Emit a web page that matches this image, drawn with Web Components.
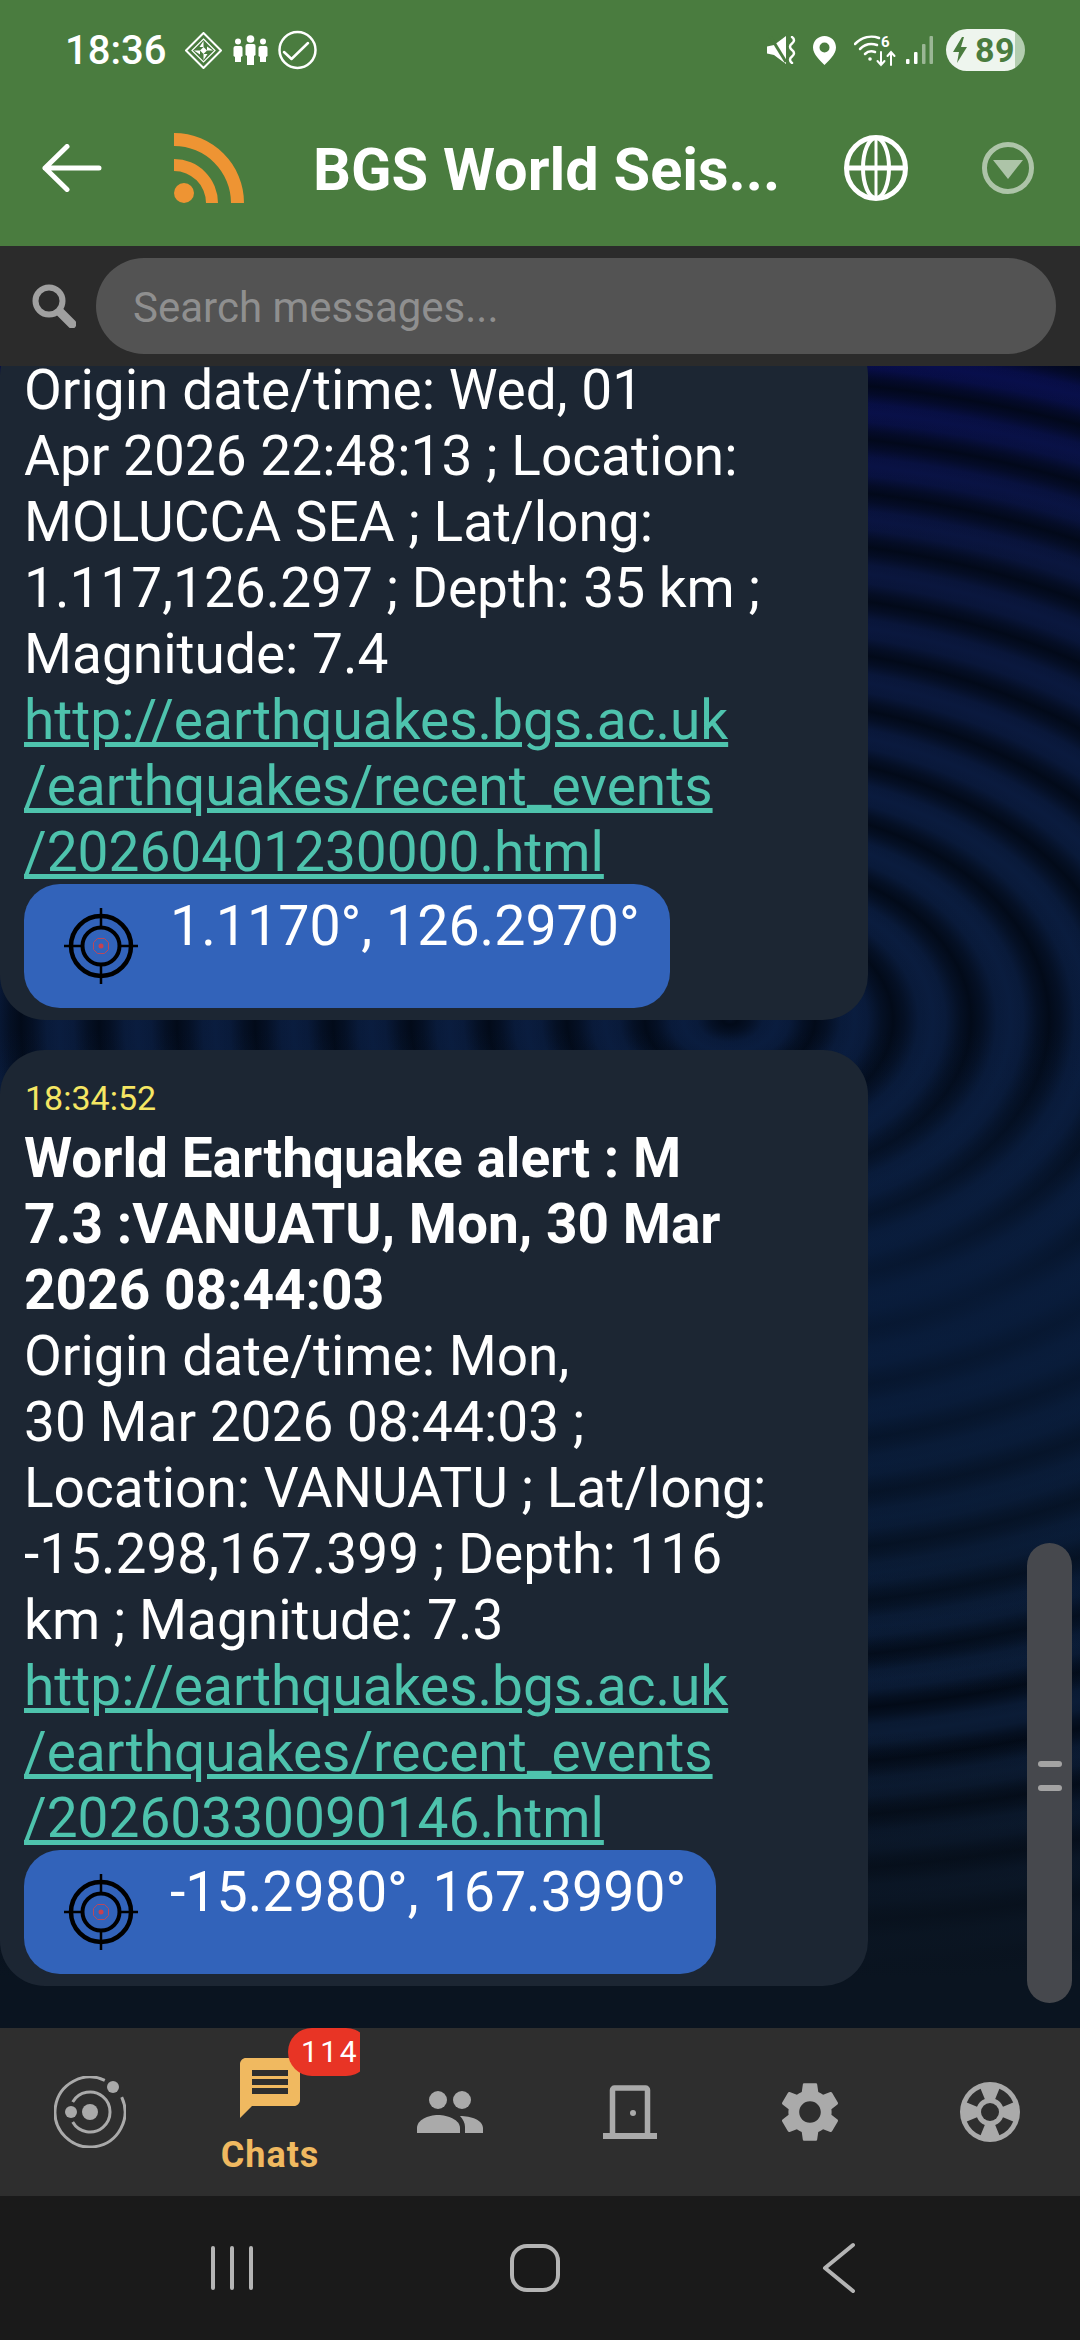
<!DOCTYPE html>
<html>
<head>
<meta charset="utf-8">
<title>BGS World Seismic</title>
<style>
html, body { margin: 0; padding: 0; width: 1080px; height: 2340px; overflow: hidden; background: #1a1a1a; }
body { font-family: Roboto, "Liberation Sans", sans-serif; color: #fff; display: flex; flex-direction: column; }
</style>
</head>
<body>
<app-header></app-header>
<search-bar>Search messages...</search-bar>
<chat-view>
  <chat-message>
    Origin date/time: Wed, 01<br>Apr 2026 22:48:13 ; Location:<br>MOLUCCA SEA ; Lat/long:<br>1.117,126.297 ; Depth: 35 km ;<br>Magnitude: 7.4
    <a slot="link">http://earthquakes.bgs.ac.uk<br>/earthquakes/recent_events<br>/20260401230000.html</a>
    <location-pill slot="pill">1.1170°, 126.2970°</location-pill>
  </chat-message>
  <chat-message>
    <span slot="time">18:34:52</span>
    <span slot="title">World Earthquake alert : M<br>7.3 :VANUATU, Mon, 30 Mar<br>2026 08:44:03</span>
    Origin date/time: Mon,<br>30 Mar 2026 08:44:03 ;<br>Location: VANUATU ; Lat/long:<br>-15.298,167.399 ; Depth: 116<br>km ; Magnitude: 7.3
    <a slot="link">http://earthquakes.bgs.ac.uk<br>/earthquakes/recent_events<br>/20260330090146.html</a>
    <location-pill slot="pill">-15.2980°, 167.3990°</location-pill>
  </chat-message>
</chat-view>
<tab-bar>
  <tab-item icon="orbit"></tab-item>
  <tab-item icon="chat" label="Chats" badge="114" active></tab-item>
  <tab-item icon="people"></tab-item>
  <tab-item icon="door"></tab-item>
  <tab-item icon="gear"></tab-item>
  <tab-item icon="buoy"></tab-item>
</tab-bar>
<system-nav></system-nav>

<script>
class AppHeader extends HTMLElement {
    constructor() {
        super();
        this.shadow = this.attachShadow({mode: 'open'});
    }

    connectedCallback() {
        this.shadow.innerHTML = `
            <style>
                :host { display: block; height: 246px; background: #4a7c3f; flex: none; }
                svg { display: block; flex: none; }
                .status { height: 80px; padding: 10px 55px 0 65px; display: flex; align-items: center; }
                .time { font-size: 40px; font-weight: 500; width: 101px; margin-right: 19px; white-space: nowrap; }
                .right { margin-left: auto; display: flex; align-items: center; }
                .battery { width: 79px; height: 42px; border-radius: 21px; margin-left: 13px; display: flex; align-items: center;
                    background: linear-gradient(90deg, #eef5ee 69px, #b3cdb0 69px); color: #4a7c3f; font-size: 34px; font-weight: 700; box-sizing: border-box; padding-left: 7px; }
                .battery span { margin-left: 8px; line-height: 42px; letter-spacing: .5px; }
                .bar { height: 156px; padding: 4px 46px 0 42px; display: flex; align-items: center; box-sizing: border-box; }
                .back { margin-top: -4px; }
                .rss { margin: -4px 0 0 72px; }
                .title { font-size: 59.500px; font-weight: 700; white-space: nowrap; flex: 1; margin-left: 69px; }
                .globe { margin-top: -4px; }
                .drop { margin: -4px 0 0 74px; }
            </style>
            <div class="status">
                <span class="time">18:36</span>
                <svg width="37" height="37" viewBox="0 0 37 37" style="margin-right:11px" fill="#fff">
                    <path d="M18.500 1L36 18.500 18.500 36 1 18.500z" fill="none" stroke="#fff" stroke-width="2" stroke-linejoin="round"/>
                    <path d="M18.500 7L30 18.500 18.500 30 7 18.500z" fill="none" stroke="#fff" stroke-width="1.200"/>
                    <path d="M18.500 9v6l-4 0zM28 18.500h-6l0-4zM18.500 28v-6l4 0zM9 18.500h6l0 4z"/>
                    <path d="M15 18.500l3.500-3.500 3.500 3.500-3.500 3.500z"/>
                </svg>
                <svg width="35" height="30" viewBox="0 0 35 30" style="margin-right:10px" fill="#fff">
                    <circle cx="17.500" cy="4" r="3.800"/><circle cx="5" cy="6.500" r="3"/><circle cx="30" cy="6.500" r="3"/>
                    <path d="M12.500 11a2 2 0 0 1 2-2h6a2 2 0 0 1 2 2v9l-1.500 1v9h-7v-9l-1.500-1z"/>
                    <path d="M0.500 13a2 2 0 0 1 2-2h5a2 2 0 0 1 2 2v8l-1.500 1v5h-6v-5l-1.500-1z"/>
                    <path d="M25.500 13a2 2 0 0 1 2-2h5a2 2 0 0 1 2 2v8l-1.500 1v5h-6v-5l-1.500-1z"/>
                </svg>
                <svg width="39" height="40" viewBox="0 0 39 40" fill="none" stroke="#fff" stroke-width="2.500">
                    <circle cx="19.500" cy="20" r="18"/>
                    <path d="M6 22l7.500 7L30 13" stroke-linecap="round" stroke-linejoin="round"/>
                </svg>
                <div class="right">
                    <svg width="30" height="28" viewBox="0 0 30 28" style="margin-right:16px">
                        <path d="M0 10.500l7-1.500L19 0v28L7 19l-7-1.500z" fill="#fff"/>
                        <path d="M3 0l16 26" stroke="#4a7c3f" stroke-width="3"/>
                        <path d="M25 1q4 3 0 6.500q-4 3 0 6.500q4 3 0 6.500q-4 3 0 6.500" fill="none" stroke="#fff" stroke-width="2.500" stroke-linecap="round"/>
                    </svg>
                    <svg width="23" height="29" viewBox="0 0 23 29" style="margin-right:18px">
                        <path fill="#fff" fill-rule="evenodd" d="M11.500 0C5 0 0 5 0 11.500 0 19 8 25 11.500 29 15 25 23 19 23 11.500 23 5 18 0 11.500 0zM11.500 6.500a5 5 0 1 1 0 10 5 5 0 0 1 0-10z"/>
                    </svg>
                    <svg width="42" height="33" viewBox="0 0 42 33" style="margin-right:10px" fill="none" stroke="#fff" stroke-width="2.500" stroke-linecap="round">
                        <path d="M1 10C8 3 17 1 25 4"/>
                        <path d="M6 15c5-5 11-6 17-4"/>
                        <path d="M11 20c3-3 7-3 10-2"/>
                        <circle cx="16" cy="25" r="1.800" fill="#fff" stroke="none"/>
                        <text x="27" y="13" font-family="Roboto, sans-serif" font-size="15" font-weight="700" fill="#fff" stroke="none">6</text>
                        <path d="M27 18v13M23.500 27l3.500 4 3.500-4M37 31V18M33.500 22l3.500-4 3.500 4" stroke-width="2"/>
                    </svg>
                    <svg width="27" height="28" viewBox="0 0 27 28" fill="#fff">
                        <rect x="0" y="23" width="3.500" height="5" rx="1"/>
                        <rect x="8" y="16" width="3.500" height="12" rx="1"/>
                        <rect x="16" y="8" width="3.500" height="20" rx="1" opacity=".45"/>
                        <rect x="23.500" y="0" width="3.500" height="28" rx="1" opacity=".45"/>
                    </svg>
                    <div class="battery">
                        <svg width="14" height="26" viewBox="0 0 14 26"><path d="M9 0L0 15h6l-2 11L14 10H8l3-10z" fill="#4a7c3f"/></svg>
                        <span>89</span>
                    </div>
                </div>
            </div>
            <div class="bar">
                <svg class="back" width="60" height="48" viewBox="0 0 60 48" fill="none" stroke="#fff" stroke-width="5" stroke-linecap="round" stroke-linejoin="round">
                    <path d="M57 24H3M25 2.500L3 24l22 21.500"/>
                </svg>
                <svg class="rss" width="70" height="70" viewBox="0 0 70 70" fill="#ee9433">
                    <path d="M0 0a70 70 0 0 1 70 70H57A57 57 0 0 0 0 13z"/>
                    <path d="M0 26a44 44 0 0 1 44 44H32A32 32 0 0 0 0 38z"/>
                    <circle cx="10" cy="60" r="10"/>
                </svg>
                <span class="title">BGS World Seis...</span>
                <svg class="globe" width="64" height="66" viewBox="0 0 64 66" fill="none" stroke="#fff" stroke-width="5">
                    <ellipse cx="32" cy="33" rx="29.500" ry="30.500"/>
                    <path d="M3 33h58"/>
                    <ellipse cx="32" cy="33" rx="13" ry="30" stroke-width="4"/>
                    <path d="M32 3v60" stroke-width="3"/>
                </svg>
                <svg class="drop" width="52" height="52" viewBox="0 0 52 52" opacity=".55">
                    <circle cx="26" cy="26" r="23.500" fill="none" stroke="#fff" stroke-width="5"/>
                    <path d="M11 18h30L26 37z" fill="#fff"/>
                </svg>
            </div>
        `;
    }
}

class SearchBar extends HTMLElement {
    constructor() {
        super();
        this.shadow = this.attachShadow({mode: 'open'});
    }

    connectedCallback() {
        this.shadow.innerHTML = `
            <style>
                :host { display: flex; align-items: center; height: 120px; background: #2b2b2b; flex: none; padding: 0 24px 0 32px; box-sizing: border-box; }
                svg { display: block; flex: none; margin-right: 20px; }
                .pill { flex: 1; height: 96px; border-radius: 48px; background: #535353; color: #8f8f8f; font-size: 42px; line-height: 96px; padding-left: 37px; display: flex; align-items: center; }
                .pill span { display: block; line-height: 50px; padding-top: 3px; }
            </style>
            <svg width="44" height="44" viewBox="0 0 44 44" fill="none" stroke="#a0a0a0">
                <circle cx="17" cy="17" r="13.500" stroke-width="6"/>
                <path d="M28 28l12 12" stroke-width="9" stroke-linecap="round"/>
            </svg>
            <div class="pill"><span><slot></slot></span></div>
        `;
    }
}

class ChatView extends HTMLElement {
    constructor() {
        super();
        this.shadow = this.attachShadow({mode: 'open'});
    }

    connectedCallback() {
        // rings are elliptical, centre sits behind the gap between the two bubbles
        this.shadow.innerHTML = `
            <style>
                :host {
                    display: flex; flex-direction: column; justify-content: flex-end; gap: 30px;
                    height: 1662px; flex: none; overflow: hidden; position: relative; box-sizing: border-box; padding-bottom: 42px;
                    background:
                        linear-gradient(180deg, transparent 0, transparent 82%, #0a1420 97%, #0a1420 100%),
                        linear-gradient(180deg, transparent 40%, rgba(9,28,58,.8) 56%, rgba(9,26,48,.45) 72%, transparent 80%),
                        repeating-radial-gradient(ellipse 78px 53px at 730px 654px,
                            rgba(0,6,16,.8) 9%, rgba(0,6,16,.55) 24%, rgba(0,6,16,.1) 42%, rgba(0,6,16,0) 60%,
                            rgba(0,6,16,.1) 76%, rgba(0,6,16,.55) 94%, rgba(0,6,16,.8) 109%),
                        linear-gradient(180deg, #080e4c 0, #0a163e 12%, #0a1c3e 30%, #0a1e40 60%, #0b1c36 82%, #0b1728 100%);
                }
                .thumb { position: absolute; left: 1027px; top: 1177px; width: 45px; height: 460px; border-radius: 23px; background: #46484d; display: flex; flex-direction: column; align-items: center; justify-content: center; gap: 18px; }
                .thumb i { display: block; width: 24px; height: 6px; border-radius: 3px; background: #a3a3a3; position: relative; top: 3px; }
            </style>
            <slot></slot>
            <div class="thumb"><i></i><i></i></div>
        `;
    }
}

class ChatMessage extends HTMLElement {
    constructor() {
        super();
        this.shadow = this.attachShadow({mode: 'open'});
    }

    connectedCallback() {
        this.shadow.innerHTML = `
            <style>
                :host { display: block; flex: none; width: 868px; box-sizing: border-box; background: #1c2633; border-radius: 45px; padding: 24px 25px 12px 24px; font-size: 55px; line-height: 66px; color: #fff; white-space: nowrap; }
                .time { display: block; font-size: 34px; line-height: 48px; color: #f5e663; padding: 0 0 3px 1px; }
                .title { display: block; font-weight: 700; }
                ::slotted(a) { display: block; color: #4ec3ad; text-decoration: underline; }
                .pill { display: block; margin: -1px 0 0 0; }
            </style>
            <span class="time"><slot name="time"></slot></span>
            <span class="title"><slot name="title"></slot></span>
            <slot></slot>
            <slot name="link"></slot>
            <div class="pill"><slot name="pill"></slot></div>
        `;
    }
}

class LocationPill extends HTMLElement {
    constructor() {
        super();
        this.shadow = this.attachShadow({mode: 'open'});
    }

    connectedCallback() {
        this.shadow.innerHTML = `
            <style>
                :host { display: inline-flex; align-items: center; height: 124px; box-sizing: border-box; background: #3263ba; border-radius: 36px; padding: 0 30px 0 39px; color: #fff; vertical-align: top; }
                svg { display: block; flex: none; margin-right: 31px; }
                span { align-self: flex-start; padding-top: 10px; line-height: 66px; font-size: 55.500px; }
            </style>
            <svg width="76" height="76" viewBox="0 0 76 76" fill="none" stroke="#000">
                <circle cx="38" cy="38" r="30" stroke-width="4.500"/>
                <circle cx="38" cy="38" r="18.500" stroke-width="4"/>
                <path d="M1 38h17M58 38h17M38 0v18M38 58v18" stroke-width="2.500"/>
                <path d="M34.500 30h7l4 4v7l-4 4h-7l-4-4v-7z" transform="translate(0 .5)" stroke="#b8485c" stroke-width="1"/>
                <circle cx="38" cy="38" r="2.500" fill="#c8404f" stroke="none"/>
            </svg>
            <span><slot></slot></span>
        `;
    }
}

const BUOY_WINDOW = 'M23.200-9.400A25 25 0 0 0 9.400-23.200L5.200-13A14 14 0 0 1 13-5.200z';

const TAB_ICONS = {
    orbit: `<g fill="none" stroke="#aaa" stroke-width="3">
                <path d="M50.800 4.300A35 35 0 1 0 67.700 21.200"/>
                <path d="M18.700 26A20 20 0 1 1 18.700 46"/>
            </g>
            <g fill="#aaa"><circle cx="59" cy="11" r="6"/><circle cx="17" cy="36" r="6"/><circle cx="36" cy="36" r="8"/></g>`,
    chat: `<path fill="#f0b960" fill-rule="evenodd" d="M60 6H12C8.700 6 6 8.700 6 12v54l12-12h42c3.300 0 6-2.700 6-6V12c0-3.300-2.700-6-6-6zM18 18h36v6H18zM18 27h36v6H18zM18 36h36v6H18z"/>`,
    people: `<g fill="#aaa"><circle cx="24" cy="24" r="9"/><circle cx="48" cy="24" r="9"/>
                <path d="M3 57v-5c0-8 11-13 21-13s22 5 22 13v5z"/>
                <path d="M51 57v-6c0-4-2-8-5-11 11 0 23 4 23 12v5z"/></g>`,
    door: `<path d="M18.500 60V14a2 2 0 0 1 2-2h31a2 2 0 0 1 2 2v46" fill="none" stroke="#aaa" stroke-width="5.500"/>
            <rect x="9" y="57" width="54" height="6" fill="#aaa"/><circle cx="39" cy="37" r="3" fill="#aaa"/>`,
    gear: `<g transform="scale(3)"><path fill="#aaa" d="M19.140 12.940c.04-.3.06-.61.06-.94 0-.32-.02-.64-.07-.94l2.030-1.580c.18-.14.23-.41.12-.61l-1.920-3.320c-.12-.22-.37-.29-.59-.22l-2.390.96c-.5-.38-1.030-.7-1.620-.94l-.36-2.540c-.04-.24-.24-.41-.48-.41h-3.840c-.24 0-.43.17-.47.41l-.36 2.540c-.59.24-1.130.57-1.620.94l-2.390-.96c-.22-.08-.47 0-.59.22L2.740 8.870c-.12.21-.08.47.12.61l2.030 1.580c-.05.3-.09.63-.09.94s.02.64.07.94l-2.030 1.580c-.18.14-.23.41-.12.61l1.920 3.320c.12.22.37.29.59.22l2.390-.96c.5.38 1.030.7 1.620.94l.36 2.54c.05.24.24.41.48.41h3.840c.24 0 .44-.17.47-.41l.36-2.540c.59-.24 1.130-.56 1.620-.94l2.390.96c.22.08.47 0 .59-.22l1.920-3.320c.12-.22.07-.47-.12-.61l-2.010-1.580zM12 15.600c-1.980 0-3.600-1.620-3.600-3.600s1.620-3.600 3.600-3.600 3.600 1.620 3.600 3.600-1.620 3.600-3.600 3.600z"/></g>`,
    buoy: `<g transform="translate(36 36)" fill="#2e2e2e">
                <circle r="30" fill="#aaa"/><circle r="9"/>
                <path d="${BUOY_WINDOW}"/>
                <path transform="rotate(90)" d="${BUOY_WINDOW}"/>
                <path transform="rotate(180)" d="${BUOY_WINDOW}"/>
                <path transform="rotate(270)" d="${BUOY_WINDOW}"/>
            </g>`
};

class TabBar extends HTMLElement {
    constructor() {
        super();
        this.shadow = this.attachShadow({mode: 'open'});
    }

    connectedCallback() {
        this.shadow.innerHTML = `
            <style>
                :host { display: grid; grid-template-columns: repeat(6, 180px); height: 168px; background: #2e2e2e; flex: none; }
            </style>
            <slot></slot>
        `;
    }
}

class TabItem extends HTMLElement {
    constructor() {
        super();
        this.shadow = this.attachShadow({mode: 'open'});
    }

    connectedCallback() {
        const icon = this.getAttribute('icon');
        const label = this.getAttribute('label');
        const badge = this.getAttribute('badge');
        this.shadow.innerHTML = `
            <style>
                :host { display: flex; flex-direction: column; align-items: center; justify-content: center; position: relative; overflow: hidden; height: 168px; }
                svg { display: block; flex: none; }
                .label { font-size: 36px; font-weight: 700; line-height: 40px; margin-top: 8px; padding-top: 3px; margin-bottom: -3px; color: #f0b960; letter-spacing: 1px; }
                .badge { position: absolute; left: 108px; top: 0; width: 82px; height: 48px; border-radius: 24px; background: #e83425; color: #fff; font-size: 30px; line-height: 48px; letter-spacing: 2.500px; padding-left: 13px; box-sizing: border-box; }
            </style>
            <svg width="72" height="72" viewBox="0 0 72 72">${TAB_ICONS[icon]}</svg>
            ${label ? `<span class="label">${label}</span>` : ''}
            ${badge ? `<span class="badge">${badge}</span>` : ''}
        `;
    }
}

class SystemNav extends HTMLElement {
    constructor() {
        super();
        this.shadow = this.attachShadow({mode: 'open'});
    }

    connectedCallback() {
        this.shadow.innerHTML = `
            <style>
                :host { display: flex; align-items: center; height: 144px; background: #1a1a1a; flex: none; padding-left: 211px; box-sizing: border-box; }
                svg { display: block; flex: none; }
                .home { margin: 0 262px 0 255px; }
            </style>
            <svg width="44" height="46" viewBox="0 0 44 46" stroke="#b4b4b4" stroke-width="4" stroke-linecap="round">
                <path d="M2 3v40M21 3v40M40 3v40"/>
            </svg>
            <svg class="home" width="50" height="50" viewBox="0 0 50 50" fill="none" stroke="#b4b4b4" stroke-width="4">
                <rect x="2" y="3" width="46" height="44" rx="15"/>
            </svg>
            <svg width="34" height="52" viewBox="0 0 34 52" fill="none" stroke="#b4b4b4" stroke-width="4" stroke-linecap="round" stroke-linejoin="round">
                <path d="M31 3L3 26l28 23"/>
            </svg>
        `;
    }
}

customElements.define('app-header', AppHeader);
customElements.define('search-bar', SearchBar);
customElements.define('chat-view', ChatView);
customElements.define('chat-message', ChatMessage);
customElements.define('location-pill', LocationPill);
customElements.define('tab-bar', TabBar);
customElements.define('tab-item', TabItem);
customElements.define('system-nav', SystemNav);
</script>
</body>
</html>
